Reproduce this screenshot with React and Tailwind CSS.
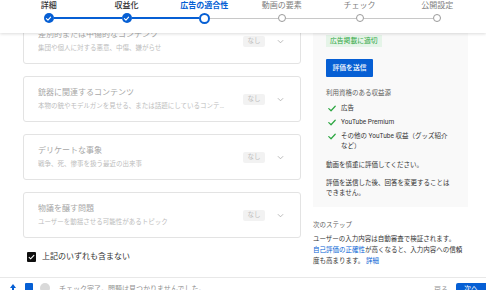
import React from "react";

const steps = ["詳細", "収益化", "広告の適合性", "動画の要素", "チェック", "公開設定"];
const current = 2;

function StepCircle({ i }) {
  if (i < current) {
    return (
      <div className="w-[10px] h-[10px] rounded-full bg-[#065fd4] flex items-center justify-center shrink-0">
        <svg width="7" height="7" viewBox="0 0 10 10" fill="none">
          <path d="M2 5.2 L4.2 7.2 L8 3" stroke="white" strokeWidth="1.6" strokeLinecap="round" strokeLinejoin="round" />
        </svg>
      </div>
    );
  }
  if (i === current) {
    return <div className="w-[11px] h-[11px] rounded-full border-2 border-[#065fd4] bg-white shrink-0" />;
  }
  return <div className="w-[8px] h-[8px] rounded-full border-[1.5px] border-[#9a9a9a] bg-white shrink-0" />;
}

function Seg({ kind }) {
  if (kind === "none") return <div className="flex-1" />;
  if (kind === "blue") return <div className="flex-1 h-[2px] bg-[#065fd4]" />;
  return <div className="flex-1 h-[1px] bg-[#c8c8c8]" />;
}

const cards = [
  { t: "差別的または中傷的なコンテンツ", s: "集団や個人に対する悪意、中傷、嫌がらせ" },
  { t: "銃器に関連するコンテンツ", s: "本物の銃やモデルガンを見せる、または話題にしているコンテンツ" },
  { t: "デリケートな事象", s: "戦争、死、惨事を扱う最近の出来事" },
  { t: "物議を醸す問題", s: "ユーザーを動揺させる可能性があるトピック" },
];

function Check() {
  return (
    <svg width="8" height="7" viewBox="0 0 10 8" fill="none" className="shrink-0">
      <path d="M1 4.2 L3.8 6.8 L9 1.2" stroke="#2ba640" strokeWidth="1.5" strokeLinecap="round" strokeLinejoin="round" />
    </svg>
  );
}

export default function App() {
  return (
    <div className="w-[486px] h-[290px] bg-white overflow-hidden flex flex-col font-['Roboto','Noto_Sans_CJK_JP',sans-serif] text-[#0f0f0f]">
      <header className="h-[33px] shrink-0 relative z-10 bg-white shadow-[0_1px_3px_rgba(0,0,0,0.14)] grid grid-cols-6 px-[10px]">
        {steps.map((s, i) => {
          const left = i === 0 ? "none" : i <= current ? "blue" : "gray";
          const right = i === steps.length - 1 ? "none" : i < current ? "blue" : "gray";
          const color =
            i < current ? "text-[#333] font-medium" : i === current ? "text-[#065fd4] font-bold" : "text-[#808080]";
          return (
            <div key={s} className="flex flex-col items-center">
              <div className={`mt-[1px] text-[8px] leading-[10px] whitespace-nowrap ${color}`}>{s}</div>
              <div className="w-full h-[14px] flex items-center">
                <Seg kind={left} />
                <StepCircle i={i} />
                <Seg kind={right} />
              </div>
            </div>
          );
        })}
      </header>

      <main className="flex-1 overflow-hidden">
        <div className="-mt-[15px] flex gap-[12px] pl-[23px]">
          <div className="w-[278px] flex flex-col">
            <div className="flex flex-col gap-[12px]">
              {cards.map((c) => (
                <div key={c.t} className="h-[46px] border border-[#e3e3e3] rounded-[3px] flex items-center pl-[14px] pr-[16px]">
                  <div className="flex-1 min-w-0 flex flex-col gap-[4px] pr-[12px]">
                    <div className="text-[8px] leading-[10px] text-[#a8a8a8] truncate">{c.t}</div>
                    <div className="text-[6.5px] leading-[9px] text-[#bdbdbd] truncate pr-[4px]">{c.s}</div>
                  </div>
                  <div className="w-[22px] h-[11px] bg-[#f2f2f2] rounded-[2px] text-[6.5px] leading-[11px] text-[#bdbdbd] text-center shrink-0">
                    なし
                  </div>
                  <svg width="7" height="5" viewBox="0 0 8 5" fill="none" className="ml-[12px] shrink-0">
                    <path d="M1 1 L4 4 L7 1" stroke="#a8a8a8" strokeWidth="0.9" />
                  </svg>
                </div>
              ))}
            </div>
            <div className="mt-[14px] h-[10px] flex items-center pl-[4px] gap-[6px]">
              <div className="w-[9px] h-[10px] bg-[#0f0f0f] rounded-[1px] flex items-center justify-center">
                <svg width="7" height="6" viewBox="0 0 10 8" fill="none">
                  <path d="M1.2 4.2 L3.8 6.6 L8.8 1.4" stroke="white" strokeWidth="1.6" />
                </svg>
              </div>
              <span className="text-[8px] leading-[10px] text-[#333]">上記のいずれも含まない</span>
            </div>
          </div>

          <div className="w-[155px] flex flex-col">
            <div className="bg-[#f9f9f9] px-[13px] pt-[17px] pb-[9px] flex flex-col items-start">
              <div className="h-[12px] px-[4px] bg-[#e5f4e8] text-[#2ba640] text-[6.8px] leading-[12px] whitespace-nowrap">
                広告掲載に適切
              </div>
              <div className="mt-[12px] w-[47px] h-[18px] bg-[#065fd4] rounded-[1px] text-white text-[6.8px] font-medium flex items-center justify-center whitespace-nowrap">
                評価を送信
              </div>
              <div className="mt-[11px] text-[6.5px] leading-[10px] text-[#606060]">利用資格のある収益源</div>
              <div className="mt-[5px] flex items-center gap-[5px] pl-[2px] text-[6.5px] leading-[10px] text-[#333]">
                <Check />
                <span>広告</span>
              </div>
              <div className="mt-[4px] flex items-center gap-[5px] pl-[2px] text-[6.5px] leading-[10px] text-[#333]">
                <Check />
                <span>YouTube Premium</span>
              </div>
              <div className="mt-[4px] flex items-start gap-[5px] pl-[2px] text-[6.5px] leading-[10px] text-[#333]">
                <div className="h-[10px] flex items-center">
                  <Check />
                </div>
                <span className="whitespace-nowrap">
                  その他の YouTube 収益（グッズ紹介
                  <br />
                  など）
                </span>
              </div>
              <div className="mt-[9px] text-[6.5px] leading-[10px] text-[#333] whitespace-nowrap">
                動画を慎重に評価してください。
              </div>
              <div className="mt-[8px] text-[6.5px] leading-[10px] text-[#333] whitespace-nowrap">
                評価を送信した後、回答を変更することは
                <br />
                できません。
              </div>
            </div>
            <div className="mt-[13px] text-[6.5px] leading-[10px] text-[#606060]">次のステップ</div>
            <div className="mt-[4px] text-[6.5px] leading-[11px] text-[#333] whitespace-nowrap">
              ユーザーの入力内容は自動審査で検証されます。
              <br />
              <span className="text-[#065fd4]">自己評価の正確性</span>が高くなると、入力内容への信頼
              <br />
              度も高まります。 <span className="text-[#065fd4]">詳細</span>
            </div>
          </div>
        </div>
      </main>

      <footer className="h-[13px] shrink-0 border-t border-[#e8e8e8] flex items-start pl-[10px] pr-0 pt-[4px] relative">
        <svg width="6" height="9" viewBox="0 0 6 9" className="mt-[2px]">
          <path d="M3 0 L6 4 L4 4 L4 9 L2 9 L2 4 L0 4 Z" fill="#065fd4" />
        </svg>
        <div className="ml-[9px] w-[8px] h-[9px] bg-[#065fd4] rounded-[1px] mt-[1px]" />
        <div className="ml-[7px] w-[10px] h-[10px] rounded-full bg-[#d9d9d9] mt-[1px]" />
        <span className="ml-[9px] text-[7px] leading-[10px] text-[#909090] whitespace-nowrap mt-[2px]">
          チェック完了。問題は見つかりませんでした。
        </span>
        <div className="ml-auto flex items-start">
          <span className="text-[7px] leading-[10px] text-[#909090] mt-[3px]">戻る</span>
          <div className="ml-[8px] w-[30px] h-[12px] bg-[#065fd4] rounded-tl-[2px] text-white text-[7px] leading-[12px] text-center mt-[1px]">
            次へ
          </div>
        </div>
      </footer>
    </div>
  );
}
